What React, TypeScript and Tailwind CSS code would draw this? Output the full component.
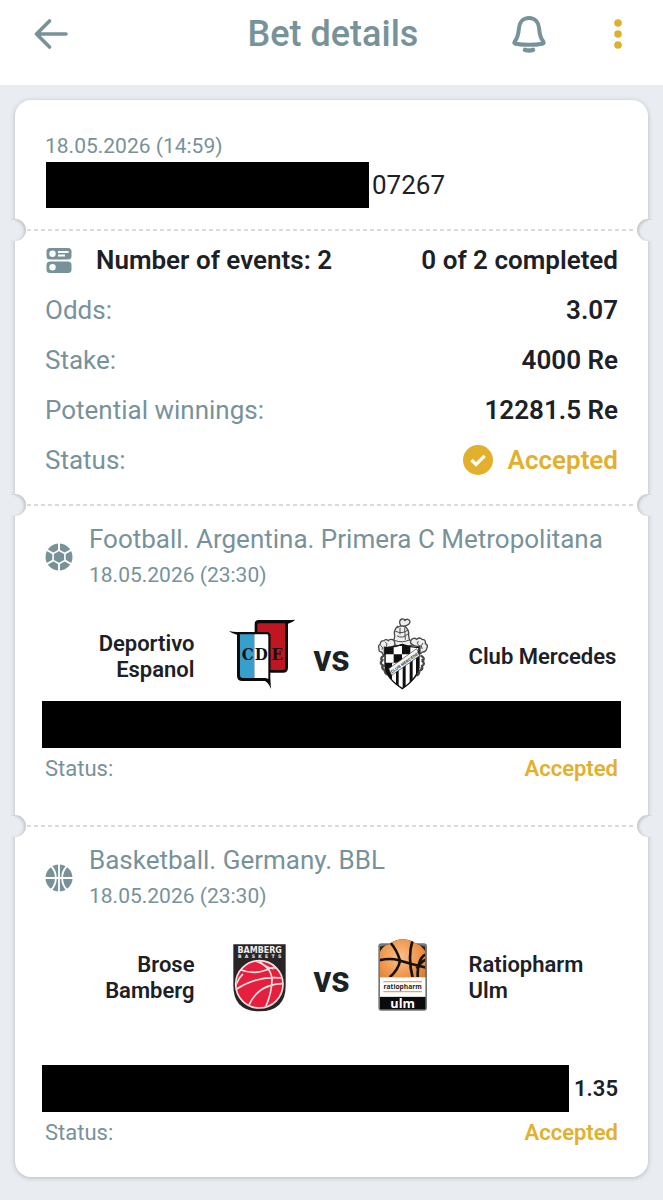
import type { ReactNode } from "react";

function ArrowIcon() {
  return (
    <svg viewBox="0 0 34 32" className="h-8 w-[34px]" fill="none" stroke="currentColor" strokeWidth="3.6" strokeLinecap="round" strokeLinejoin="round" aria-hidden="true">
      <path d="M32 16H2.5M15.500 3L2.500 16l13 13" />
    </svg>
  );
}

function BellIcon() {
  return (
    <svg viewBox="0 0 36 40" className="h-10 w-9" fill="none" stroke="currentColor" strokeWidth="4" strokeLinecap="round" strokeLinejoin="round" aria-hidden="true">
      <path d="M18 4c-6 0-9.600 4.300-10.100 10.300C7.500 20 7 23.500 3.600 27.800c-.7 1-.2 1.700.9 1.900 8.800 1.500 18.200 1.500 27 0 1.100-.2 1.600-.9.900-1.900-3.400-4.300-3.900-7.800-4.300-13.500C27.600 8.300 24 4 18 4z" />
      <path d="M14 35.800c2.600.8 5.400.8 8 0" strokeWidth="4.500" />
    </svg>
  );
}

function DotsIcon() {
  return (
    <svg viewBox="0 0 10 32" className="h-8 w-[10px]" fill="currentColor" aria-hidden="true">
      <circle cx="5" cy="5" r="3.800" />
      <circle cx="5" cy="16" r="3.800" />
      <circle cx="5" cy="27" r="3.800" />
    </svg>
  );
}

function EventsIcon() {
  return (
    <svg viewBox="0 0 28 28" className="size-7 text-[#78929a]" aria-hidden="true">
      <rect x="1.500" y="2" width="25" height="11.500" rx="3.500" fill="currentColor" />
      <rect x="1.500" y="15.500" width="25" height="11.500" rx="3.500" fill="currentColor" />
      <circle cx="7.500" cy="7.700" r="3.200" fill="#fff" />
      <circle cx="7.500" cy="21.200" r="3.200" fill="#fff" />
      <path d="M13 6h10.500M13 9.500h7" stroke="#fff" strokeWidth="1.800" />
    </svg>
  );
}

function CheckIcon() {
  return (
    <svg viewBox="0 0 30 30" className="size-[30px]" aria-hidden="true">
      <circle cx="15" cy="15" r="15" fill="currentColor" />
      <path d="M8.500 15l4.500 4.500 8.700-8.700" fill="none" stroke="#fff" strokeWidth="3.200" />
    </svg>
  );
}

function FootballIcon() {
  return (
    <svg viewBox="0 0 28 28" className="size-7 text-[#78929a]" aria-hidden="true">
      <circle cx="14" cy="14" r="13.500" fill="currentColor" />
      <path d="M14 7.200l5.900 3.400v6.800L14 20.800l-5.900-3.400v-6.800z" fill="none" stroke="#fff" strokeWidth="1.600" />
      <path d="M14 0v7.500M14 20.500V28M19.700 10.700L27 6.500M19.700 17.300l7.300 4.200M8.300 10.700L1 6.500M8.300 17.300L1 21.500" fill="none" stroke="#fff" strokeWidth="2" />
    </svg>
  );
}

function BasketballIcon() {
  return (
    <svg viewBox="0 0 28 28" className="size-7 text-[#78929a]" aria-hidden="true">
      <circle cx="14" cy="14" r="13.500" fill="currentColor" />
      <path d="M14 0v28M0 14h28M6 2c6.500 6.500 6.500 17.500 0 24M22 2c-6.500 6.500-6.500 17.500 0 24" fill="none" stroke="#fff" strokeWidth="1.800" />
    </svg>
  );
}

function EspanolCrest() {
  return (
    <svg viewBox="42 48 198 246" className="h-[82px] w-[66px]" role="img" aria-label="Deportivo Espanol crest">
      <path d="M119 100V72q0-12 12-12h90q10 0 20-1-6 8-22 12v132q0 15-15 15h-38z" fill="#0b0b0c" />
      <path d="M127 97V74q0-4 5-4h78v134q0 6-7 6h-37V107q0-9-9-10z" fill="#c01622" />
      <path d="M42 93q12 3 24 3h90q10 1 10 12v125q1 20 2 34-6-17-18-24H82q-16 0-16-16V104q-14-2-24-11z" fill="#0b0b0c" />
      <path d="M75 103h43v131H84q-9 0-9-9z" fill="#379fcd" />
      <path d="M118 103h38q4 0 4 5v129q-5-3-10-3h-32z" fill="#fff" />
      <g fontFamily="'DejaVu Serif Condensed', 'DejaVu Serif', serif" fontWeight="700" fontSize="50" textAnchor="middle" fill="#111">
        <text x="98" y="180">C</text>
        <text x="139" y="180">D</text>
        <text x="187" y="180">E</text>
      </g>
    </svg>
  );
}

function MercedesCrest() {
  return (
    <svg viewBox="27 48 198 246" className="h-[82px] w-[66px]" role="img" aria-label="Club Mercedes crest">
      <defs>
        <clipPath id="mercedes-shield">
          <path d="M75 142q25 2 52-9 27 11 50 9v54q-2 38-50 70-50-32-52-70z" />
        </clipPath>
      </defs>
      <g fill="#eee" stroke="#494949" strokeWidth="4" strokeLinecap="round">
        <path d="M112 80q-12 10-8 28 0 14-12 22l34 12 37-8q-15-8-17-26 2-18-10-28-12-6-24 2z" />
        <path d="M107 94q20 10 37-4M112 108q15 10 32-6M106 122q20 8 42-2M120 84v18M134 84l2 34" fill="none" strokeWidth="3" />
        <path d="M122 77q-8-16 4-20 8-2 8 6 4-8 12-4 8 6 0 14-10 8-24 4z" />
        <path d="M103 122q-12-8-18 0-6-6-14 0-10 0-10 10-8 4-4 14-2 10 8 10 4 10 8 8v-22q16 4 32-6zM152 122q8-12 18-4 10-8 16 0 12 0 10 12 10 6 4 16-2 10-12 10l-8 6v-24q-16 4-28-8z" />
        <path d="M70 168q-10 6-4 14-8 8 2 14-4 10 6 14 0 12 12 14 4 12 12 12M184 168q12 6 4 16 8 8-2 14 4 12-8 14 0 14-12 14-6 12-12 12" fill="none" strokeWidth="7" />
        <path d="M62 136q8 4 5 12M76 126q8 4 4 12M174 124q-6 8 2 12M188 130q-8 6-2 16M64 176l8 4M66 200l10-2M184 180l8-4M176 202l10 4" fill="none" strokeWidth="3" />
      </g>
      <g clipPath="url(#mercedes-shield)">
        <path d="M70 128h110v140H70z" fill="#101010" />
        <path d="M101 138h25v25h-25zM76 163h25v25H76zM126 163h25v25h-25zM101 188h25v25h-25zM151 138h25v25h-25z" fill="#fff" />
        <path d="M75 216L180 150v120H75z" fill="#101010" />
        <path d="M96 190h12v80H96zM116 190h12v80h-12zM137 180h12v90h-12zM158 170h10v90h-10z" fill="#fff" />
      </g>
      <path d="M75 142q25 2 52-9 27 11 50 9v54q-2 38-50 70-50-32-52-70z" fill="none" stroke="#111" strokeWidth="4" />
      <path d="M86 206l84-60 9 21-84 59z" fill="#f5f5f5" stroke="#333" strokeWidth="2" />
      <text transform="translate(96 220) rotate(-35)" fontFamily="'Liberation Sans', sans-serif" fontWeight="700" fontSize="12" fill="#222">CLUB MERCEDES</text>
    </svg>
  );
}

function BambergCrest() {
  return (
    <svg viewBox="42 39 198 246" className="h-[82px] w-[66px]" role="img" aria-label="Bamberg Baskets crest">
      <defs>
        <clipPath id="bamberg-ball">
          <circle cx="133" cy="181" r="69" />
        </clipPath>
      </defs>
      <path d="M55 61h157v124q0 76-79 77-78-1-78-77z" fill="#292426" />
      <circle cx="133" cy="181" r="70" fill="#e61f3e" />
      <g clipPath="url(#bamberg-ball)" fill="none" stroke="#f8e4e2" strokeWidth="5">
        <path d="M72 136q48 20 94-3 12-4 18 0M119 110q46 14 52 52 1 42-21 92M64 196q60-42 140-34M101 245q28-64 102-66M134 112q20 20 42 22M60 192q8-28 24-42" />
      </g>
      <circle cx="133" cy="181" r="71" fill="none" stroke="#f8e4e2" strokeWidth="5" />
      <g fontFamily="'DejaVu Sans', sans-serif" fontWeight="700" fill="#f2eeee" textAnchor="middle">
        <text x="134" y="86" fontSize="24">BAMBERG</text>
        <text x="134" y="102" fontSize="14">{"B\u00a0\u00a0A\u00a0\u00a0S\u00a0\u00a0K\u00a0\u00a0E\u00a0\u00a0T\u00a0\u00a0S"}</text>
      </g>
    </svg>
  );
}

function UlmCrest() {
  return (
    <svg viewBox="27 39 198 246" className="h-[82px] w-[66px]" role="img" aria-label="Ratiopharm Ulm crest">
      <defs>
        <radialGradient id="ulm-ball" cx="45%" cy="35%" r="70%">
          <stop offset="0" stopColor="#fbc08a" />
          <stop offset=".55" stopColor="#ee9347" />
          <stop offset="1" stopColor="#c9702c" />
        </radialGradient>
        <clipPath id="ulm-panel">
          <path d="M60 160V68l28-7q18-15 40-15t44 15l24 7v92z" />
        </clipPath>
      </defs>
      <rect x="55" y="58" width="146" height="202" rx="9" fill="#777" />
      <g clipPath="url(#ulm-panel)">
        <path d="M58 40h142v122H58z" fill="#222" />
        <circle cx="128" cy="123" r="79" fill="url(#ulm-ball)" />
        <path d="M56 109q36-8 60 0 38 12 84 22M90 54q22 26 30 56-4 26-31 50M158 48q-16 50 0 114M196 92q-24 12-23 68M170 134q14-24 30-28" fill="none" stroke="#17110c" strokeWidth="8" />
      </g>
      <path d="M60 160h136v58H60z" fill="#fff" />
      <path d="M60 219h136v37H60z" fill="#0b0b0b" />
      <path d="M70 173h116M70 203h116" stroke="#e6a45c" strokeWidth="4" />
      <g fontFamily="'Open Sans', sans-serif" fontWeight="700" textAnchor="middle">
        <text x="128" y="194" fontSize="20" fill="#222">ratiopharm</text>
        <text x="128" y="251" fontSize="38" fill="#fff">ulm</text>
      </g>
    </svg>
  );
}

function Divider() {
  return (
    <div className="relative h-0" role="separator">
      <div className="mx-3 h-[2px] -translate-y-px bg-[repeating-linear-gradient(90deg,#d9dbdd_0px,#d9dbdd_4px,transparent_4px,transparent_7px)]" />
      <span className="absolute -top-[11px] -left-[11px] size-[22px] rounded-full bg-[#e9edf2] shadow-[inset_-2px_1px_3px_#c3c7cc]" />
      <span className="absolute -top-[11px] -right-[11px] size-[22px] rounded-full bg-[#e9edf2] shadow-[inset_2px_1px_3px_#c3c7cc]" />
      <span className="absolute -top-[10px] -left-[15px] h-5 w-[15px] bg-[#e9edf2]" />
      <span className="absolute -top-[10px] -right-[15px] h-5 w-[15px] bg-[#e9edf2]" />
    </div>
  );
}

function SummaryRow({ label, children }: { label: string; children: ReactNode }) {
  return (
    <div className="flex h-[50px] items-center justify-between">
      <dt className="text-[#78929a]">{label}</dt>
      <dd className="flex items-center gap-[15px] font-semibold">{children}</dd>
    </div>
  );
}

type EventProps = {
  icon: ReactNode;
  league: string;
  date: string;
  home: ReactNode;
  away: ReactNode;
  homeCrest: ReactNode;
  awayCrest: ReactNode;
  children: ReactNode;
};

function EventBlock({ icon, league, date, home, away, homeCrest, awayCrest, children }: EventProps) {
  return (
    <section className="px-[30px] pt-4">
      <div className="flex items-center gap-4">
        {icon}
        <div className="text-[#78929a]">
          <h2 className="text-[26px] leading-9">{league}</h2>
          <p className="text-[21px] leading-9">{date}</p>
        </div>
      </div>
      <div className="mt-[23px] grid grid-cols-[1fr_66px_40px_66px_1fr] items-center gap-x-[17px] text-[22px] leading-[26px] font-semibold">
        <p className="pr-[17px] text-right">{home}</p>
        {homeCrest}
        <span className="pt-1 text-center text-[36px] font-bold">vs</span>
        {awayCrest}
        <p className="pl-[17px]">{away}</p>
      </div>
      {children}
      <div className="flex h-10 items-center justify-between text-[22px]">
        <span className="text-[#78929a]">Status:</span>
        <span className="font-semibold text-[#e3b02d]">Accepted</span>
      </div>
    </section>
  );
}

export default function App() {
  return (
    <div className="min-h-screen bg-[#e9edf2] font-[Roboto,sans-serif] text-[#1c2126]">
      <header className="grid h-[85px] grid-cols-[1fr_auto_1fr] items-start bg-white pt-[10px] pr-10 pl-[34px] text-[#78929a]">
        <button type="button" aria-label="Back" className="flex h-12 w-[34px] items-center">
          <ArrowIcon />
        </button>
        <h1 className="pl-[9px] text-[36px] leading-[48px] font-medium">Bet details</h1>
        <div className="flex h-12 items-center justify-end gap-[66px]">
          <button type="button" aria-label="Notifications">
            <BellIcon />
          </button>
          <button type="button" aria-label="More options" className="text-[#dfb02f]">
            <DotsIcon />
          </button>
        </div>
      </header>

      <main className="px-[15px] pt-[15px] pb-[22px]">
        <article className="rounded-2xl bg-white pb-[25px] shadow-[0_1px_5px_#b4b9c0]">
          <div className="px-[30px] pt-[30px] pb-[22px]">
            <p className="text-[21px] leading-8 text-[#78929a]">18.05.2026 (14:59)</p>
            <div className="flex items-center gap-[3px] pl-px">
              <span className="h-[46px] w-[323px] bg-black" />
              <span className="text-[26px]">07267</span>
            </div>
          </div>

          <Divider />

          <dl className="px-[30px] pt-[5px] pb-5 text-[26px]">
            <div className="flex h-[50px] items-center justify-between font-semibold">
              <dt className="flex items-center gap-[23px]">
                <EventsIcon />
                Number of events: 2
              </dt>
              <dd>0 of 2 completed</dd>
            </div>
            <SummaryRow label="Odds:">3.07</SummaryRow>
            <SummaryRow label="Stake:">4000 Re</SummaryRow>
            <SummaryRow label="Potential winnings:">12281.5 Re</SummaryRow>
            <SummaryRow label="Status:">
              <span className="flex items-center gap-[15px] text-[#e3b02d]">
                <CheckIcon />
                Accepted
              </span>
            </SummaryRow>
          </dl>

          <Divider />

          <EventBlock
            icon={<FootballIcon />}
            league="Football. Argentina. Primera C Metropolitana"
            date="18.05.2026 (23:30)"
            home={<>Deportivo<br />Espanol</>}
            away="Club Mercedes"
            homeCrest={<EspanolCrest />}
            awayCrest={<MercedesCrest />}
          >
            <div className="-mx-[3px] mt-[3px] h-[47px] bg-black" />
          </EventBlock>

          <div className="pt-[38px]">
            <Divider />
          </div>

          <EventBlock
            icon={<BasketballIcon />}
            league="Basketball. Germany. BBL"
            date="18.05.2026 (23:30)"
            home={<>Brose<br />Bamberg</>}
            away={<>Ratiopharm<br />Ulm</>}
            homeCrest={<BambergCrest />}
            awayCrest={<UlmCrest />}
          >
            <div className="-ml-[3px] mt-[46px] flex h-[47px] items-center gap-[5px]">
              <span className="h-full grow bg-black" />
              <span className="text-[22px] font-semibold">1.35</span>
            </div>
          </EventBlock>
        </article>
      </main>
    </div>
  );
}
